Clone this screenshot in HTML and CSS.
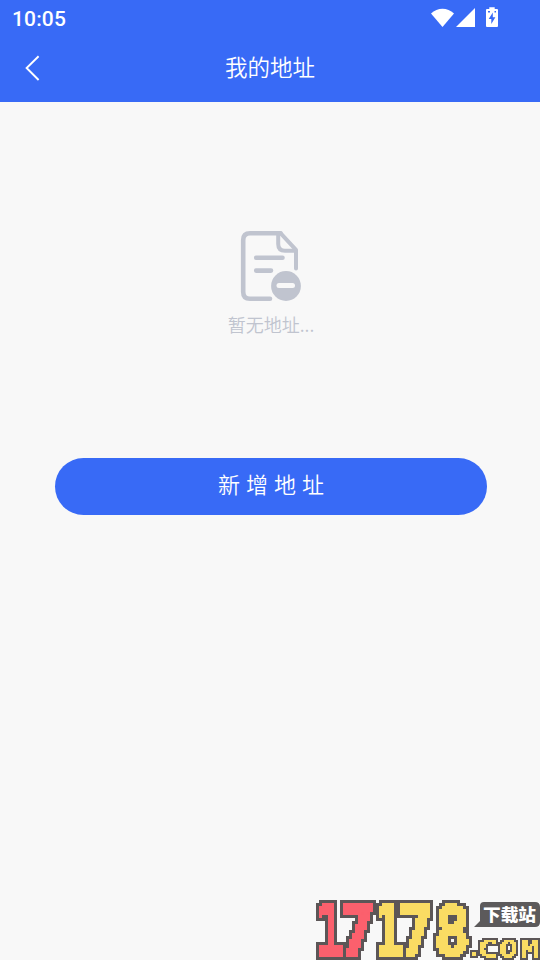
FILE: index.html
```html
<!DOCTYPE html>
<html lang="zh-CN">
<head>
<meta charset="utf-8">
<title>我的地址</title>
<link rel="stylesheet" href="styles.css">
</head>
<body>
<div class="screen">
  <header class="header">
    <div class="status">
      <span class="time">10:05</span>
      <svg class="status-icons" width="70" height="22" viewBox="0 0 70 22" fill="#fff" aria-hidden="true">
        <path d="M1 6.6C7.5 .1 17.5 .1 24 6.6L12.5 20Z"/>
        <path d="M26 20H45V1Z"/>
        <path fill-rule="evenodd" d="M59.3 .3H64.7V2H67Q68 2 68 3V19Q68 20 67 20H57Q56 20 56 19V3Q56 2 57 2H59.3ZM62.8 5.5L58.7 12H61.3V17L65.4 10.3H62.8ZM58 4V5.6H60V4ZM64.5 4V5.6H66V4Z"/>
      </svg>
    </div>
    <div class="navbar">
      <svg class="back" width="16" height="26" viewBox="0 0 16 26" fill="none" stroke="#fff" stroke-width="1.9" aria-hidden="true"><path d="M14.6 1.2L2.6 13L14.6 25"/></svg>
      <h1 class="title">我的地址</h1>
    </div>
  </header>
  <main class="content">
    <section class="empty">
      <svg class="empty-icon" width="62" height="72" viewBox="0 0 62 72" fill="none" stroke="#c0c4cf" stroke-width="4.6" stroke-linecap="round" stroke-linejoin="round" aria-hidden="true">
        <path d="M30 68.8H10Q3.2 68.8 3.2 62V10Q3.2 3.2 10 3.2H40.5"/>
        <path d="M56 38.5V19.8L40.5 3.2" stroke-width="4"/>
        <path d="M38.2 4V14Q38.2 20.7 45 20.7H55.5" stroke-width="4"/>
        <path d="M16.2 27.8H42.5M16.2 40.6H31"/>
        <circle cx="46" cy="56" r="14.9" fill="#c0c4cf" stroke="none"/>
        <path d="M39 55.6H52.5" stroke="#f8f8f8" stroke-width="5"/>
      </svg>
      <p class="empty-text">暂无地址...</p>
    </section>
    <button class="add" type="button">新增地址</button>
  </main>
  <svg class="watermark" width="224" height="62" viewBox="316 898 224 62">
    <defs>
      <filter id="pixel" filterUnits="userSpaceOnUse" x="316" y="898" width="158" height="62" color-interpolation-filters="sRGB">
        <feFlood x="317" y="901" width="1" height="1" flood-color="#000" result="dot"/>
        <feComposite in="dot" in2="dot" operator="over" x="316" y="900" width="3" height="3"/>
        <feTile result="grid"/>
        <feComposite in="SourceGraphic" in2="grid" operator="in"/>
        <feComponentTransfer><feFuncA type="discrete" tableValues="0 1"/></feComponentTransfer>
        <feMorphology operator="dilate" radius="1" result="blocks"/>
        <feMorphology in="blocks" operator="dilate" radius="3" result="wide"/>
        <feFlood flood-color="#5c5657"/>
        <feComposite in2="wide" operator="in" result="edge"/>
        <feMerge><feMergeNode in="edge"/><feMergeNode in="blocks"/></feMerge>
      </filter>
      <filter id="pixel-small" filterUnits="userSpaceOnUse" x="466" y="932" width="74" height="28" color-interpolation-filters="sRGB">
        <feFlood x="466" y="932" width="1" height="1" flood-color="#000" result="dot"/>
        <feComposite in="dot" in2="dot" operator="over" x="466" y="932" width="2" height="2"/>
        <feTile result="grid"/>
        <feComposite in="SourceGraphic" in2="grid" operator="in"/>
        <feComponentTransfer result="s"><feFuncA type="discrete" tableValues="0 1"/></feComponentTransfer>
        <feOffset in="s" dx="1" dy="0" result="a"/>
        <feMerge result="row"><feMergeNode in="s"/><feMergeNode in="a"/></feMerge>
        <feOffset in="row" dx="0" dy="1" result="b"/>
        <feMerge result="blocks"><feMergeNode in="row"/><feMergeNode in="b"/></feMerge>
        <feMorphology in="blocks" operator="dilate" radius="2" result="wide"/>
        <feFlood flood-color="#5c5657"/>
        <feComposite in2="wide" operator="in" result="edge"/>
        <feMerge><feMergeNode in="edge"/><feMergeNode in="blocks"/></feMerge>
      </filter>
    </defs>
    <path class="bubble" d="M484 902H535Q540 902 540 907V922Q540 927 535 927H474L480 921V906Q480 902 484 902Z"/>
    <g class="digits" filter="url(#pixel)">
      <text class="red" transform="translate(330 955) scale(.66 1)">1</text>
      <text class="red" transform="translate(357 955) scale(.87 1)">7</text>
      <text class="yellow" transform="translate(389 955) scale(.66 1)">1</text>
      <text class="yellow" transform="translate(416 955) scale(.83 1)">7</text>
      <text class="yellow" transform="translate(452 954.5) scale(.87 .98)">8</text>
    </g>
    <text class="site" x="483" y="921" textLength="53" lengthAdjust="spacingAndGlyphs">下载站</text>
    <g class="com" filter="url(#pixel-small)">
      <text transform="translate(474 956)">.</text>
      <text transform="translate(487 956.5) scale(1.5 1)">C</text>
      <text transform="translate(508 956.5) scale(1.35 1)">O</text>
      <text transform="translate(529 956.5) scale(1.35 1)">M</text>
    </g>
  </svg>
</div>
</body>
</html>
```
FILE: styles.css
```css
* { box-sizing: border-box; }
body {
  margin: 0;
  background: #f8f8f8;
  font-family: "Noto Sans CJK SC", sans-serif;
}
.screen {
  position: relative;
  width: 540px;
  height: 960px;
  overflow: hidden;
  background: #f8f8f8;
}
.header {
  height: 102px;
  background: #386af6;
  color: #fff;
}
.status {
  display: flex;
  justify-content: space-between;
  height: 36px;
  padding: 7px 40px 0 12px;
}
.time {
  font: 500 21px/24px Roboto, sans-serif;
  letter-spacing: .15px;
}
.navbar {
  display: grid;
  grid-template-columns: 80px 1fr 80px;
  align-items: center;
  height: 64px;
}
.back { margin-left: 24px; }
.title {
  margin: 0;
  padding-bottom: 4px;
  text-align: center;
  font-size: 22.5px;
  line-height: 32px;
  font-weight: 350;
}
.content {
  display: flex;
  flex-direction: column;
  align-items: center;
  padding-top: 128px;
}
.empty {
  display: flex;
  flex-direction: column;
  align-items: center;
  height: 228px;
  padding-left: 2px;
}
.empty-icon { display: block; }
.empty-text {
  margin: 9px 0 0;
  color: #c0c4cf;
  font-size: 18px;
  font-weight: 350;
  line-height: 26px;
}
.add {
  width: 432px;
  height: 57px;
  margin-left: 2px;
  padding: 0 0 7px 6px;
  border: 0;
  border-radius: 29px;
  background: #386af6;
  color: #fff;
  font: 350 22px/32px "Noto Sans CJK SC", sans-serif;
  letter-spacing: 6px;
}
.watermark {
  position: absolute;
  right: 0;
  bottom: 0;
}
.bubble { fill: #5c5a5b; }
.digits {
  font: 700 69px "DejaVu Sans Mono", monospace;
  text-anchor: middle;
  stroke-width: 3px;
}
.red { fill: #fb606d; stroke: #fb606d; }
.yellow { fill: #fadc63; stroke: #fadc63; }
.site {
  fill: #fff;
  font: 900 17px "Noto Sans CJK SC", sans-serif;
}
.com {
  fill: #fadc63;
  text-anchor: middle;
  font: 700 24px "DejaVu Sans Mono", monospace;
}
```
